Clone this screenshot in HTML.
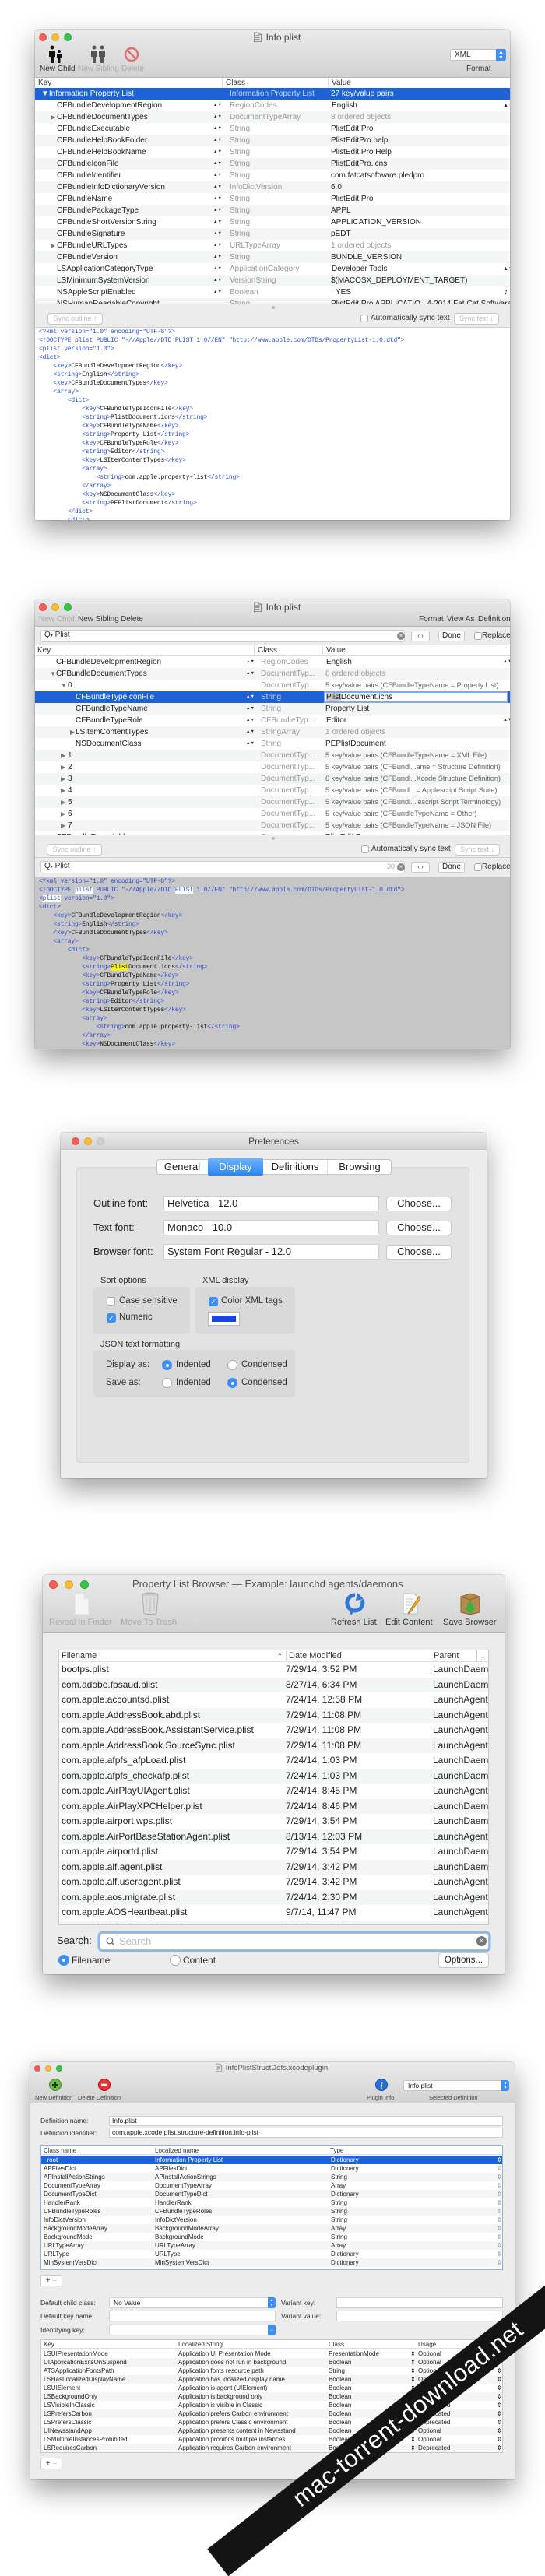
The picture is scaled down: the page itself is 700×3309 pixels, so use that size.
<!DOCTYPE html>
<html><head><meta charset="utf-8">
<style>
*{margin:0;padding:0;box-sizing:border-box}
body{width:700px;height:3241px;background:#fff;position:relative;overflow:hidden;font-family:"Liberation Sans",Arial,sans-serif;color:#222}
.win{position:absolute;background:#fff;box-shadow:0 14px 34px rgba(0,0,0,.38),0 0 0 1px rgba(0,0,0,.12);border-radius:5px 5px 2px 2px;overflow:hidden}
.a{position:absolute;white-space:nowrap}
.tb{position:absolute;left:0;right:0;top:0;background:linear-gradient(#ebebeb,#d2d2d2);border-bottom:1px solid #b5b5b5}
.tl{position:absolute;width:10px;height:10px;border-radius:50%}
.red{background:#fc5f57;border:1px solid #df4744}.yel{background:#fdbc2e;border:1px solid #dea236}.grn{background:#33c748;border:1px solid #27aa35}.gry{background:#d0d0d0;border:1px solid #bdbdbd}
.row{position:absolute;left:0;right:0;height:15px;font-size:10px;line-height:15px}
.alt{background:#f4f5f5}
.sel{background:#1f62d6;color:#fff}
.g{color:#9a9a9a}
.d{color:#666}
.v{font-size:9.3px;letter-spacing:-.1px}
.hdr{position:absolute;left:0;right:0;height:14px;font-size:10px;line-height:14px;background:#fff;border-bottom:1px solid #ddd;color:#333}
.btn{position:absolute;background:#fff;border:1px solid #c8c8c8;border-radius:4px;text-align:center}
.xml{position:absolute;font-family:"Liberation Mono",monospace;font-size:8px;line-height:11px;white-space:pre;color:#111;letter-spacing:-.2px}
.xml b{font-weight:normal;color:#2f4fd0}
.cb{position:absolute;width:11px;height:11px;border:1px solid #aaa;border-radius:3px;background:#fff}
.cbo{position:absolute;width:12px;height:12px;border-radius:3px;background:#3d8ff5;color:#fff;font-size:9px;line-height:12px;text-align:center}
.rd{position:absolute;width:13px;height:13px;border-radius:50%;border:1px solid #aaa;background:#fff}
.rdo{position:absolute;width:13px;height:13px;border-radius:50%;background:#3d8ff5}
.rdo:after{content:"";position:absolute;left:4.5px;top:4.5px;width:4px;height:4px;border-radius:50%;background:#fff}
.br{position:absolute;left:0;right:0;height:19.5px;font-size:12px;line-height:19.5px}
.fr{position:absolute;left:0;right:0;height:11px;font-size:8px;line-height:11px}
.fld{position:absolute;background:#fff;border:1px solid #cfcfcf}
</style></head><body>

<!-- ============ WINDOW 1 ============ -->
<div class="win" style="left:45px;top:38px;width:610px;height:630px;">
 <div class="tb" style="height:62px"></div>
 <div class="tl red" style="left:5px;top:5px"></div><div class="tl yel" style="left:21px;top:5px"></div><div class="tl grn" style="left:37px;top:5px"></div>
 <div class="a" style="left:278px;top:3px;font-size:12px;color:#444">&#128196;&#xFE0E; Info.plist</div>
 <svg class="a" style="left:16px;top:20px" width="22" height="24" viewBox="0 0 22 24"><circle cx="6" cy="3" r="2.5" fill="#111"/><path d="M2 7h8v8H8v8H4v-8H2z" fill="#111"/><circle cx="15" cy="8" r="2" fill="#111"/><path d="M12 11h6v6h-1.5v6h-3v-6H12z" fill="#111"/></svg>
 <svg class="a" style="left:70px;top:20px" width="22" height="24" viewBox="0 0 22 24"><circle cx="6" cy="3" r="2.5" fill="#555"/><path d="M2 7h8v8H8v8H4v-8H2z" fill="#555"/><circle cx="16" cy="3" r="2.5" fill="#555"/><path d="M12 7h8v8h-2v8h-4v-8h-2z" fill="#555"/></svg>
 <svg class="a" style="left:114px;top:22px" width="20" height="20" viewBox="0 0 20 20"><circle cx="10" cy="10" r="8" fill="none" stroke="#e46f6f" stroke-width="2.5"/><path d="M4.5 4.5l11 11" stroke="#e46f6f" stroke-width="2.5"/></svg>
 <div class="a" style="left:6px;top:45px;font-size:10px;color:#333">New Child</div>
 <div class="a" style="left:55px;top:45px;font-size:10px;color:#aaa">New Sibling</div>
 <div class="a" style="left:111px;top:45px;font-size:10px;color:#aaa">Delete</div>
 <div class="a" style="left:533px;top:25px;width:72px;height:15px;background:#fff;border:1px solid #c4c4c4;border-radius:3px;font-size:10px;line-height:13px;padding-left:5px;color:#333">XML</div>
 <div class="a" style="left:592px;top:25px;width:13px;height:15px;background:#3b8ff6;border-radius:0 3px 3px 0;color:#fff;font-size:7px;line-height:7px;text-align:center;padding-top:1px">&#9650;<br>&#9660;</div>
 <div class="a" style="left:554px;top:45px;font-size:10px;color:#333">Format</div>
 <div class="hdr" style="top:62px"><span class="a" style="left:4px">Key</span><span class="a" style="left:240px;border-left:1px solid #ddd;padding-left:4px">Class</span><span class="a" style="left:376px;border-left:1px solid #ddd;padding-left:4px">Value</span></div>
 <div class="a" style="left:0;right:0;top:75px;height:277px;overflow:hidden">
  <div class="row sel" style="top:0"><span class="a" style="left:8px">&#9660;Information Property List</span><span class="a" style="left:250px;color:#c6d6f5">Information Property List</span><span class="a" style="left:380px">27 key/value pairs</span></div>
  <div class="row" style="top:15px"><span class="a" style="left:28px">CFBundleDevelopmentRegion</span><span class="a g" style="left:250px">RegionCodes</span><span class="a" style="left:381px">English</span><span class="a" style="left:601px;font-size:7px">&#9650;&#9660;</span></div>
  <div class="row alt" style="top:30px"><span class="a" style="left:20px;font-size:8px;color:#777">&#9654;</span><span class="a" style="left:28px">CFBundleDocumentTypes</span><span class="a g" style="left:250px">DocumentTypeArray</span><span class="a g" style="left:380px">8 ordered objects</span></div>
  <div class="row" style="top:45px"><span class="a" style="left:28px">CFBundleExecutable</span><span class="a g" style="left:250px">String</span><span class="a" style="left:380px">PlistEdit Pro</span></div>
  <div class="row alt" style="top:60px"><span class="a" style="left:28px">CFBundleHelpBookFolder</span><span class="a g" style="left:250px">String</span><span class="a" style="left:380px">PlistEditPro.help</span></div>
  <div class="row" style="top:75px"><span class="a" style="left:28px">CFBundleHelpBookName</span><span class="a g" style="left:250px">String</span><span class="a" style="left:380px">PlistEdit Pro Help</span></div>
  <div class="row alt" style="top:90px"><span class="a" style="left:28px">CFBundleIconFile</span><span class="a g" style="left:250px">String</span><span class="a" style="left:380px">PlistEditPro.icns</span></div>
  <div class="row" style="top:105px"><span class="a" style="left:28px">CFBundleIdentifier</span><span class="a g" style="left:250px">String</span><span class="a" style="left:380px">com.fatcatsoftware.pledpro</span></div>
  <div class="row alt" style="top:120px"><span class="a" style="left:28px">CFBundleInfoDictionaryVersion</span><span class="a g" style="left:250px">InfoDictVersion</span><span class="a" style="left:380px">6.0</span></div>
  <div class="row" style="top:135px"><span class="a" style="left:28px">CFBundleName</span><span class="a g" style="left:250px">String</span><span class="a" style="left:380px">PlistEdit Pro</span></div>
  <div class="row alt" style="top:150px"><span class="a" style="left:28px">CFBundlePackageType</span><span class="a g" style="left:250px">String</span><span class="a" style="left:380px">APPL</span></div>
  <div class="row" style="top:165px"><span class="a" style="left:28px">CFBundleShortVersionString</span><span class="a g" style="left:250px">String</span><span class="a" style="left:380px">APPLICATION_VERSION</span></div>
  <div class="row alt" style="top:180px"><span class="a" style="left:28px">CFBundleSignature</span><span class="a g" style="left:250px">String</span><span class="a" style="left:380px">pEDT</span></div>
  <div class="row" style="top:195px"><span class="a" style="left:20px;font-size:8px;color:#777">&#9654;</span><span class="a" style="left:28px">CFBundleURLTypes</span><span class="a g" style="left:250px">URLTypeArray</span><span class="a g" style="left:380px">1 ordered objects</span></div>
  <div class="row alt" style="top:210px"><span class="a" style="left:28px">CFBundleVersion</span><span class="a g" style="left:250px">String</span><span class="a" style="left:380px">BUNDLE_VERSION</span></div>
  <div class="row" style="top:225px"><span class="a" style="left:28px">LSApplicationCategoryType</span><span class="a g" style="left:250px">ApplicationCategory</span><span class="a" style="left:381px">Developer Tools</span><span class="a" style="left:601px;font-size:7px">&#9650;&#9660;</span></div>
  <div class="row alt" style="top:240px"><span class="a" style="left:28px">LSMinimumSystemVersion</span><span class="a g" style="left:250px">VersionString</span><span class="a" style="left:380px">$(MACOSX_DEPLOYMENT_TARGET)</span></div>
  <div class="row" style="top:255px"><span class="a" style="left:28px">NSAppleScriptEnabled</span><span class="a g" style="left:250px">Boolean</span><span class="a" style="left:386px">YES</span><span class="a" style="left:601px;font-size:8px">&#8661;</span></div>
  <div class="row alt" style="top:270px"><span class="a" style="left:28px">NSHumanReadableCopyright</span><span class="a g" style="left:250px">String</span><span class="a" style="left:380px">PlistEdit Pro APPLICATIO...4-2014 Fat Cat Software</span></div>
 </div>
 <div class="a" style="left:229px;top:90px;font-size:5.5px;line-height:15px;color:#333;white-space:pre">▲▼
▲▼
▲▼
▲▼
▲▼
▲▼
▲▼
▲▼
▲▼
▲▼
▲▼
▲▼
▲▼
▲▼
▲▼
▲▼
▲▼</div>
 <div class="a" style="left:0;right:0;top:352px;height:31px;background:#ececec;border-top:1px solid #c9c9c9;border-bottom:1px solid #cfcfcf"></div>
 <div class="a" style="left:304px;top:355px;width:4px;height:4px;border-radius:50%;background:#bbb"></div>
 <div class="btn" style="left:16px;top:364px;width:71px;height:15px;font-size:9px;line-height:13px;color:#bbb">Sync outline &#8593;</div>
 <div class="cb" style="left:418px;top:366px;width:10px;height:10px"></div>
 <div class="a" style="left:431px;top:365px;font-size:10px;color:#333">Automatically sync text</div>
 <div class="btn" style="left:538px;top:364px;width:58px;height:15px;font-size:9px;line-height:13px;color:#bbb">Sync text &#8595;</div>
 <div class="xml" style="left:5px;top:383px"><b>&lt;?xml version="1.0" encoding="UTF-8"?&gt;</b>
<b>&lt;!DOCTYPE plist PUBLIC "-//Apple//DTD PLIST 1.0//EN" "http://www.apple.com/DTDs/PropertyList-1.0.dtd"&gt;</b>
<b>&lt;plist version="1.0"&gt;</b>
<b>&lt;dict&gt;</b>
    <b>&lt;key&gt;</b>CFBundleDevelopmentRegion<b>&lt;/key&gt;</b>
    <b>&lt;string&gt;</b>English<b>&lt;/string&gt;</b>
    <b>&lt;key&gt;</b>CFBundleDocumentTypes<b>&lt;/key&gt;</b>
    <b>&lt;array&gt;</b>
        <b>&lt;dict&gt;</b>
            <b>&lt;key&gt;</b>CFBundleTypeIconFile<b>&lt;/key&gt;</b>
            <b>&lt;string&gt;</b>PlistDocument.icns<b>&lt;/string&gt;</b>
            <b>&lt;key&gt;</b>CFBundleTypeName<b>&lt;/key&gt;</b>
            <b>&lt;string&gt;</b>Property List<b>&lt;/string&gt;</b>
            <b>&lt;key&gt;</b>CFBundleTypeRole<b>&lt;/key&gt;</b>
            <b>&lt;string&gt;</b>Editor<b>&lt;/string&gt;</b>
            <b>&lt;key&gt;</b>LSItemContentTypes<b>&lt;/key&gt;</b>
            <b>&lt;array&gt;</b>
                <b>&lt;string&gt;</b>com.apple.property-list<b>&lt;/string&gt;</b>
            <b>&lt;/array&gt;</b>
            <b>&lt;key&gt;</b>NSDocumentClass<b>&lt;/key&gt;</b>
            <b>&lt;string&gt;</b>PEPlistDocument<b>&lt;/string&gt;</b>
        <b>&lt;/dict&gt;</b>
        <b>&lt;dict&gt;</b></div>
</div>

<!-- ============ WINDOW 2 ============ -->
<div class="win" style="left:45px;top:770px;width:610px;height:577px;">
 <div class="tb" style="height:35px"></div>
 <div class="tl red" style="left:5px;top:5px"></div><div class="tl yel" style="left:21px;top:5px"></div><div class="tl grn" style="left:37px;top:5px"></div>
 <div class="a" style="left:278px;top:3px;font-size:12px;color:#444">&#128196;&#xFE0E; Info.plist</div>
 <div class="a" style="left:5px;top:20px;font-size:10px;color:#aaa">New Child</div>
 <div class="a" style="left:55px;top:20px;font-size:10px;color:#333">New Sibling</div>
 <div class="a" style="left:110px;top:20px;font-size:10px;color:#333">Delete</div>
 <div class="a" style="left:493px;top:20px;font-size:10px;color:#333">Format</div>
 <div class="a" style="left:529px;top:20px;font-size:10px;color:#333">View As</div>
 <div class="a" style="left:569px;top:20px;font-size:10px;color:#333">Definition</div>
 <div class="a" style="left:0;right:0;top:35px;height:24px;background:#ececec;border-bottom:1px solid #cfcfcf"></div>
 <div class="fld" style="left:7px;top:39px;width:468px;height:16px;border-radius:3px"></div>
 <div class="a" style="left:12px;top:40px;font-size:10px;color:#333">Q<span style="font-size:6px">&#9662;</span> Plist</div>
 <div class="a" style="left:465px;top:42px;width:10px;height:10px;border-radius:50%;background:#888;color:#fff;font-size:8px;line-height:10px;text-align:center">&#215;</div>
 <div class="btn" style="left:483px;top:40px;width:24px;height:14px;font-size:8px;line-height:12px;color:#444;border-radius:3px">&#8249; &#8250;</div>
 <div class="btn" style="left:518px;top:40px;width:34px;height:14px;font-size:10px;line-height:12px;border-radius:3px">Done</div>
 <div class="cb" style="left:564px;top:42px;width:10px;height:10px"></div>
 <div class="a" style="left:574px;top:41px;font-size:10px;color:#333">Replace</div>
 <div class="hdr" style="top:59px"><span class="a" style="left:3px">Key</span><span class="a" style="left:281px;border-left:1px solid #ddd;padding-left:4px">Class</span><span class="a" style="left:369px;border-left:1px solid #ddd;padding-left:4px">Value</span></div>
 <div class="a" style="left:0;right:0;top:73px;height:229px;overflow:hidden">
  <div class="row" style="top:0"><span class="a" style="left:27px">CFBundleDevelopmentRegion</span><span class="a g" style="left:290px">RegionCodes</span><span class="a" style="left:374px">English</span><span class="a" style="left:601px;font-size:6px">&#9650;&#9660;</span></div>
  <div class="row alt" style="top:15px"><span class="a" style="left:19px;font-size:8px;color:#777">&#9660;</span><span class="a" style="left:27px">CFBundleDocumentTypes</span><span class="a g" style="left:290px">DocumentTyp...</span><span class="a g" style="left:373px">8 ordered objects</span></div>
  <div class="row" style="top:30px"><span class="a" style="left:33px;font-size:8px;color:#777">&#9660;</span><span class="a" style="left:42px">0</span><span class="a g" style="left:290px">DocumentTyp...</span><span class="a d v" style="left:373px">5 key/value pairs (CFBundleTypeName = Property List)</span></div>
  <div class="row sel" style="top:45px"><span class="a" style="left:52px">CFBundleTypeIconFile</span><span class="a" style="left:290px;color:#c6d6f5">String</span><span class="a" style="left:371px;width:237px;height:15px;background:#fff;color:#111;border:2px solid #7eaaf0;line-height:11px;padding-left:1px"><span style="background:#ccc">Plist</span>Document.icns</span></div>
  <div class="row alt" style="top:60px"><span class="a" style="left:52px">CFBundleTypeName</span><span class="a g" style="left:290px">String</span><span class="a" style="left:373px">Property List</span></div>
  <div class="row" style="top:75px"><span class="a" style="left:52px">CFBundleTypeRole</span><span class="a g" style="left:290px">CFBundleTyp...</span><span class="a" style="left:374px">Editor</span><span class="a" style="left:601px;font-size:6px">&#9650;&#9660;</span></div>
  <div class="row alt" style="top:90px"><span class="a" style="left:45px;font-size:8px;color:#777">&#9654;</span><span class="a" style="left:52px">LSItemContentTypes</span><span class="a g" style="left:290px">StringArray</span><span class="a g" style="left:373px">1 ordered objects</span></div>
  <div class="row" style="top:105px"><span class="a" style="left:52px">NSDocumentClass</span><span class="a g" style="left:290px">String</span><span class="a" style="left:373px">PEPlistDocument</span></div>
  <div class="row alt" style="top:120px"><span class="a" style="left:33px;font-size:8px;color:#777">&#9654;</span><span class="a" style="left:42px">1</span><span class="a g" style="left:290px">DocumentTyp...</span><span class="a d v" style="left:373px">5 key/value pairs (CFBundleTypeName = XML File)</span></div>
  <div class="row" style="top:135px"><span class="a" style="left:33px;font-size:8px;color:#777">&#9654;</span><span class="a" style="left:42px">2</span><span class="a g" style="left:290px">DocumentTyp...</span><span class="a d v" style="left:373px">5 key/value pairs (CFBundl...ame = Structure Definition)</span></div>
  <div class="row alt" style="top:150px"><span class="a" style="left:33px;font-size:8px;color:#777">&#9654;</span><span class="a" style="left:42px">3</span><span class="a g" style="left:290px">DocumentTyp...</span><span class="a d v" style="left:373px">6 key/value pairs (CFBundl...Xcode Structure Definition)</span></div>
  <div class="row" style="top:165px"><span class="a" style="left:33px;font-size:8px;color:#777">&#9654;</span><span class="a" style="left:42px">4</span><span class="a g" style="left:290px">DocumentTyp...</span><span class="a d v" style="left:373px">5 key/value pairs (CFBundl...= Applescript Script Suite)</span></div>
  <div class="row alt" style="top:180px"><span class="a" style="left:33px;font-size:8px;color:#777">&#9654;</span><span class="a" style="left:42px">5</span><span class="a g" style="left:290px">DocumentTyp...</span><span class="a d v" style="left:373px">5 key/value pairs (CFBundl...lescript Script Terminology)</span></div>
  <div class="row" style="top:195px"><span class="a" style="left:33px;font-size:8px;color:#777">&#9654;</span><span class="a" style="left:42px">6</span><span class="a g" style="left:290px">DocumentTyp...</span><span class="a d v" style="left:373px">5 key/value pairs (CFBundleTypeName = Other)</span></div>
  <div class="row alt" style="top:210px"><span class="a" style="left:33px;font-size:8px;color:#777">&#9654;</span><span class="a" style="left:42px">7</span><span class="a g" style="left:290px">DocumentTyp...</span><span class="a d v" style="left:373px">5 key/value pairs (CFBundleTypeName = JSON File)</span></div>
  <div class="row" style="top:225px"><span class="a" style="left:27px">CFBundleExecutable</span><span class="a g" style="left:290px">String</span><span class="a" style="left:373px">PlistEdit Pro</span></div>
  <div class="a" style="left:271px;top:0;font-size:5.5px;line-height:15px;color:#333;white-space:pre">▲▼
▲▼
 
<span style="color:#fff">▲▼</span>
▲▼
▲▼
▲▼
▲▼</div>
 </div>
 <div class="a" style="left:0;right:0;top:302px;height:30px;background:#ececec;border-top:1px solid #c9c9c9;border-bottom:1px solid #cfcfcf"></div>
 <div class="a" style="left:304px;top:305px;width:4px;height:4px;border-radius:50%;background:#bbb"></div>
 <div class="btn" style="left:15px;top:314px;width:71px;height:15px;font-size:9px;line-height:13px;color:#bbb">Sync outline &#8593;</div>
 <div class="cb" style="left:419px;top:316px;width:10px;height:10px"></div>
 <div class="a" style="left:432px;top:315px;font-size:10px;color:#333">Automatically sync text</div>
 <div class="btn" style="left:539px;top:314px;width:58px;height:15px;font-size:9px;line-height:13px;color:#bbb">Sync text &#8595;</div>
 <div class="a" style="left:0;right:0;top:332px;height:25px;background:#ececec;border-bottom:1px solid #cfcfcf"></div>
 <div class="fld" style="left:7px;top:336px;width:468px;height:16px;border-radius:3px"></div>
 <div class="a" style="left:12px;top:337px;font-size:10px;color:#333">Q<span style="font-size:6px">&#9662;</span> Plist</div>
 <div class="a" style="left:452px;top:338px;font-size:9px;color:#aaa">30</div>
 <div class="a" style="left:465px;top:339px;width:10px;height:10px;border-radius:50%;background:#888;color:#fff;font-size:8px;line-height:10px;text-align:center">&#215;</div>
 <div class="btn" style="left:483px;top:337px;width:24px;height:14px;font-size:8px;line-height:12px;color:#444;border-radius:3px">&#8249; &#8250;</div>
 <div class="btn" style="left:518px;top:337px;width:34px;height:14px;font-size:10px;line-height:12px;border-radius:3px">Done</div>
 <div class="cb" style="left:564px;top:339px;width:10px;height:10px"></div>
 <div class="a" style="left:574px;top:338px;font-size:10px;color:#333">Replace</div>
 <div class="a" style="left:0;right:0;top:357px;bottom:0;background:#c6c6c6"></div>
 <div class="xml" style="left:5px;top:357px"><b>&lt;?xml version="1.0" encoding="UTF-8"?&gt;</b>
<b>&lt;!DOCTYPE <span style="background:#fff">plist</span> PUBLIC "-//Apple//DTD <span style="background:#fff">PLIST</span> 1.0//EN" "http://www.apple.com/DTDs/PropertyList-1.0.dtd"&gt;</b>
<b>&lt;<span style="background:#fff">plist</span> version="1.0"&gt;</b>
<b>&lt;dict&gt;</b>
    <b>&lt;key&gt;</b>CFBundleDevelopmentRegion<b>&lt;/key&gt;</b>
    <b>&lt;string&gt;</b>English<b>&lt;/string&gt;</b>
    <b>&lt;key&gt;</b>CFBundleDocumentTypes<b>&lt;/key&gt;</b>
    <b>&lt;array&gt;</b>
        <b>&lt;dict&gt;</b>
            <b>&lt;key&gt;</b>CFBundleTypeIconFile<b>&lt;/key&gt;</b>
            <b>&lt;string&gt;</b><span style="background:#f7f01a">Plist</span>Document.icns<b>&lt;/string&gt;</b>
            <b>&lt;key&gt;</b>CFBundleTypeName<b>&lt;/key&gt;</b>
            <b>&lt;string&gt;</b>Property List<b>&lt;/string&gt;</b>
            <b>&lt;key&gt;</b>CFBundleTypeRole<b>&lt;/key&gt;</b>
            <b>&lt;string&gt;</b>Editor<b>&lt;/string&gt;</b>
            <b>&lt;key&gt;</b>LSItemContentTypes<b>&lt;/key&gt;</b>
            <b>&lt;array&gt;</b>
                <b>&lt;string&gt;</b>com.apple.property-list<b>&lt;/string&gt;</b>
            <b>&lt;/array&gt;</b>
            <b>&lt;key&gt;</b>NSDocumentClass<b>&lt;/key&gt;</b></div>
</div>

<!-- ============ PREFERENCES ============ -->
<div class="win" style="left:78px;top:1455px;width:547px;height:444px;background:#ececec">
 <div class="tb" style="height:22px;border-bottom:1px solid #c8c8c8"></div>
 <div class="tl red" style="left:14px;top:6px"></div><div class="tl yel" style="left:30px;top:6px"></div><div class="tl gry" style="left:46px;top:6px"></div>
 <div class="a" style="left:0;width:547px;top:4px;text-align:center;font-size:12px;color:#444">Preferences</div>
 <div class="a" style="left:20px;top:44px;width:505px;height:380px;background:#e3e3e3;border:1px solid #d8d8d8;border-radius:4px"></div>
 <div class="a" style="left:123px;top:34px;width:302px;height:20px;background:#fff;border:1px solid #c5c5c5;border-radius:4px"></div>
 <div class="a" style="left:123px;top:35px;width:66px;text-align:center;font-size:13px;line-height:18px">General</div>
 <div class="a" style="left:189px;top:33px;width:71px;height:22px;background:linear-gradient(#6cb3fa,#2b84f0);color:#fff;text-align:center;font-size:13px;line-height:21px;border-radius:2px">Display</div>
 <div class="a" style="left:260px;top:35px;width:83px;text-align:center;font-size:13px;line-height:18px;border-right:1px solid #ddd">Definitions</div>
 <div class="a" style="left:343px;top:35px;width:82px;text-align:center;font-size:13px;line-height:18px">Browsing</div>

 <div class="a" style="left:42px;top:83px;font-size:13px">Outline font:</div>
 <div class="fld" style="left:132px;top:81px;width:277px;height:20px;font-size:13px;line-height:18px;padding-left:4px">Helvetica - 12.0</div>
 <div class="btn" style="left:418px;top:82px;width:84px;height:19px;font-size:13px;line-height:16px">Choose...</div>
 <div class="a" style="left:42px;top:114px;font-size:13px">Text font:</div>
 <div class="fld" style="left:132px;top:112px;width:277px;height:20px;font-size:13px;line-height:18px;padding-left:4px">Monaco - 10.0</div>
 <div class="btn" style="left:418px;top:113px;width:84px;height:19px;font-size:13px;line-height:16px">Choose...</div>
 <div class="a" style="left:42px;top:145px;font-size:13px">Browser font:</div>
 <div class="fld" style="left:132px;top:143px;width:277px;height:20px;font-size:13px;line-height:18px;padding-left:4px">System Font Regular - 12.0</div>
 <div class="btn" style="left:418px;top:144px;width:84px;height:19px;font-size:13px;line-height:16px">Choose...</div>

 <div class="a" style="left:51px;top:184px;font-size:11px;color:#333">Sort options</div>
 <div class="a" style="left:42px;top:198px;width:124px;height:60px;background:#d9d9d9;border-radius:4px"></div>
 <div class="cb" style="left:59px;top:211px"></div>
 <div class="a" style="left:75px;top:210px;font-size:11.5px;color:#333">Case sensitive</div>
 <div class="cbo" style="left:59px;top:232px">&#10003;</div>
 <div class="a" style="left:75px;top:231px;font-size:11.5px;color:#333">Numeric</div>
 <div class="a" style="left:182px;top:184px;font-size:11px;color:#333">XML display</div>
 <div class="a" style="left:173px;top:198px;width:128px;height:60px;background:#d9d9d9;border-radius:4px"></div>
 <div class="cbo" style="left:190px;top:211px">&#10003;</div>
 <div class="a" style="left:206px;top:210px;font-size:11.5px;color:#333">Color XML tags</div>
 <div class="a" style="left:189px;top:230px;width:41px;height:18px;background:#fff;border:1px solid #bbb"></div>
 <div class="a" style="left:194px;top:235px;width:31px;height:8px;background:#1846e6"></div>
 <div class="a" style="left:51px;top:266px;font-size:11px;color:#333">JSON text formatting</div>
 <div class="a" style="left:42px;top:279px;width:259px;height:61px;background:#d9d9d9;border-radius:4px"></div>
 <div class="a" style="left:58px;top:292px;font-size:11.5px;color:#333">Display as:</div>
 <div class="rdo" style="left:130px;top:292px"></div>
 <div class="a" style="left:148px;top:292px;font-size:11.5px;color:#333">Indented</div>
 <div class="rd" style="left:214px;top:292px"></div>
 <div class="a" style="left:232px;top:292px;font-size:11.5px;color:#333">Condensed</div>
 <div class="a" style="left:58px;top:315px;font-size:11.5px;color:#333">Save as:</div>
 <div class="rd" style="left:130px;top:315px"></div>
 <div class="a" style="left:148px;top:315px;font-size:11.5px;color:#333">Indented</div>
 <div class="rdo" style="left:214px;top:315px"></div>
 <div class="a" style="left:232px;top:315px;font-size:11.5px;color:#333">Condensed</div>
</div>

<!-- ============ BROWSER ============ -->
<div class="win" style="left:55px;top:2023px;width:593px;height:513px;background:#ececec">
 <div class="tb" style="height:75px"></div>
 <div class="tl red" style="left:8px;top:7px;width:11px;height:11px"></div><div class="tl yel" style="left:28px;top:7px;width:11px;height:11px"></div><div class="tl grn" style="left:48px;top:7px;width:11px;height:11px"></div>
 <div class="a" style="left:115px;top:4px;font-size:13px;color:#555">Property List Browser — Example: launchd agents/daemons</div>
 <svg class="a" style="left:39px;top:23px" width="22" height="29" viewBox="0 0 22 29"><path d="M2 1h12l6 6v21H2z" fill="#f5f5f5" stroke="#ddd"/><path d="M14 1v6h6" fill="#e6e6e6" stroke="#ddd"/></svg>
 <svg class="a" style="left:126px;top:22px" width="24" height="30" viewBox="0 0 24 30"><ellipse cx="12" cy="4" rx="10" ry="3" fill="#ccc" stroke="#aaa"/><path d="M2 5l2 22c0 2 16 2 16 0l2-22" fill="#ddd" stroke="#aaa"/><path d="M7 8v17M12 8v18M17 8v17" stroke="#bbb"/></svg>
 <svg class="a" style="left:388px;top:23px" width="26" height="30" viewBox="0 0 26 30"><path d="M13 3a10 10 0 1 0 9 6" fill="none" stroke="#2e79d8" stroke-width="5"/><path d="M16 0l8 8-10 2z" fill="#2e79d8"/><path d="M5 22l3 7 4-6z" fill="#2e79d8"/></svg>
 <svg class="a" style="left:461px;top:22px" width="26" height="30" viewBox="0 0 26 30"><path d="M2 2h14l4 4v22H2z" fill="#fafafa" stroke="#bbb"/><path d="M5 9h10M5 13h10M5 17h8M5 21h6" stroke="#ccc"/><path d="M22 6L10 24l-2 4 4-3L24 8z" fill="#f0b233" stroke="#b07a10"/></svg>
 <svg class="a" style="left:534px;top:22px" width="30" height="30" viewBox="0 0 30 30"><path d="M3 6l12-4 12 4v20l-12 3-12-3z" fill="#b58a4a" stroke="#8a6230"/><path d="M3 6l12 4 12-4M15 10v19" stroke="#8a6230" fill="none"/><path d="M11 14h8v6h4l-8 8-8-8h4z" fill="#3cb043"/></svg>
 <div class="a" style="left:8px;top:55px;font-size:11px;color:#aaa">Reveal In Finder</div>
 <div class="a" style="left:100px;top:55px;font-size:11px;color:#aaa">Move To Trash</div>
 <div class="a" style="left:370px;top:55px;font-size:11px;color:#333">Refresh List</div>
 <div class="a" style="left:440px;top:55px;font-size:11px;color:#333">Edit Content</div>
 <div class="a" style="left:514px;top:55px;font-size:11px;color:#333">Save Browser</div>
 <div class="a" style="left:20px;top:96px;width:553px;height:354px;background:#fff;border:1px solid #c9c9c9;overflow:hidden">
  <div class="a" style="left:0;right:0;top:0;height:15px;border-bottom:1px solid #ddd;font-size:11px;line-height:15px;color:#333">
   <span class="a" style="left:3px">Filename</span><span class="a" style="left:280px;font-size:8px">&#8963;</span>
   <span class="a" style="left:291px;border-left:1px solid #ddd;padding-left:3px">Date Modified</span>
   <span class="a" style="left:477px;border-left:1px solid #ddd;padding-left:3px">Parent</span>
   <span class="a" style="left:536px;width:16px;height:15px;border-left:1px solid #ccc;text-align:center;font-size:9px">&#8964;</span>
  </div>
  <div class="a" style="left:0;right:0;top:15px">
   <div class="br" style="top:0"><span class="a" style="left:3px">bootps.plist</span><span class="a" style="left:291px">7/29/14, 3:52 PM</span><span class="a" style="left:480px">LaunchDaem</span></div>
   <div class="br alt" style="top:19.5px"><span class="a" style="left:3px">com.adobe.fpsaud.plist</span><span class="a" style="left:291px">8/27/14, 6:34 PM</span><span class="a" style="left:480px">LaunchDaem</span></div>
   <div class="br" style="top:39px"><span class="a" style="left:3px">com.apple.accountsd.plist</span><span class="a" style="left:291px">7/24/14, 12:58 PM</span><span class="a" style="left:480px">LaunchAgent</span></div>
   <div class="br alt" style="top:58.5px"><span class="a" style="left:3px">com.apple.AddressBook.abd.plist</span><span class="a" style="left:291px">7/29/14, 11:08 PM</span><span class="a" style="left:480px">LaunchAgent</span></div>
   <div class="br" style="top:78px"><span class="a" style="left:3px">com.apple.AddressBook.AssistantService.plist</span><span class="a" style="left:291px">7/29/14, 11:08 PM</span><span class="a" style="left:480px">LaunchAgent</span></div>
   <div class="br alt" style="top:97.5px"><span class="a" style="left:3px">com.apple.AddressBook.SourceSync.plist</span><span class="a" style="left:291px">7/29/14, 11:08 PM</span><span class="a" style="left:480px">LaunchAgent</span></div>
   <div class="br" style="top:117px"><span class="a" style="left:3px">com.apple.afpfs_afpLoad.plist</span><span class="a" style="left:291px">7/24/14, 1:03 PM</span><span class="a" style="left:480px">LaunchDaem</span></div>
   <div class="br alt" style="top:136.5px"><span class="a" style="left:3px">com.apple.afpfs_checkafp.plist</span><span class="a" style="left:291px">7/24/14, 1:03 PM</span><span class="a" style="left:480px">LaunchDaem</span></div>
   <div class="br" style="top:156px"><span class="a" style="left:3px">com.apple.AirPlayUIAgent.plist</span><span class="a" style="left:291px">7/24/14, 8:45 PM</span><span class="a" style="left:480px">LaunchAgent</span></div>
   <div class="br alt" style="top:175.5px"><span class="a" style="left:3px">com.apple.AirPlayXPCHelper.plist</span><span class="a" style="left:291px">7/24/14, 8:46 PM</span><span class="a" style="left:480px">LaunchDaem</span></div>
   <div class="br" style="top:195px"><span class="a" style="left:3px">com.apple.airport.wps.plist</span><span class="a" style="left:291px">7/29/14, 3:54 PM</span><span class="a" style="left:480px">LaunchDaem</span></div>
   <div class="br alt" style="top:214.5px"><span class="a" style="left:3px">com.apple.AirPortBaseStationAgent.plist</span><span class="a" style="left:291px">8/13/14, 12:03 PM</span><span class="a" style="left:480px">LaunchAgent</span></div>
   <div class="br" style="top:234px"><span class="a" style="left:3px">com.apple.airportd.plist</span><span class="a" style="left:291px">7/29/14, 3:54 PM</span><span class="a" style="left:480px">LaunchDaem</span></div>
   <div class="br alt" style="top:253.5px"><span class="a" style="left:3px">com.apple.alf.agent.plist</span><span class="a" style="left:291px">7/29/14, 3:42 PM</span><span class="a" style="left:480px">LaunchDaem</span></div>
   <div class="br" style="top:273px"><span class="a" style="left:3px">com.apple.alf.useragent.plist</span><span class="a" style="left:291px">7/29/14, 3:42 PM</span><span class="a" style="left:480px">LaunchAgent</span></div>
   <div class="br alt" style="top:292.5px"><span class="a" style="left:3px">com.apple.aos.migrate.plist</span><span class="a" style="left:291px">7/24/14, 2:30 PM</span><span class="a" style="left:480px">LaunchAgent</span></div>
   <div class="br" style="top:312px"><span class="a" style="left:3px">com.apple.AOSHeartbeat.plist</span><span class="a" style="left:291px">9/7/14, 11:47 PM</span><span class="a" style="left:480px">LaunchAgent</span></div>
   <div class="br alt" style="top:331.5px"><span class="a" style="left:3px">com.apple.AOSPushRelay.plist</span><span class="a" style="left:291px">7/24/14, 1:04 PM</span><span class="a" style="left:480px">LaunchAgent</span></div>
  </div>
 </div>
 <div class="a" style="left:18px;top:462px;font-size:13px;color:#222">Search:</div>
 <div class="a" style="left:73px;top:460px;width:500px;height:22px;background:#fff;border:1px solid #bbb;border-radius:4px;box-shadow:0 0 0 2.5px #8ab7ee"></div>
 <svg class="a" style="left:81px;top:465px" width="12" height="12" viewBox="0 0 12 12"><circle cx="5" cy="5" r="3.8" fill="none" stroke="#666" stroke-width="1.2"/><path d="M8 8l3 3" stroke="#666" stroke-width="1.3"/></svg>
 <div class="a" style="left:96px;top:463px;font-size:13px;color:#bbb;border-left:1px solid #333;padding-left:1px;line-height:15px">Search</div>
 <div class="a" style="left:557px;top:464px;width:13px;height:13px;border-radius:50%;background:#777;color:#fff;font-size:10px;line-height:13px;text-align:center">&#215;</div>
 <div class="rdo" style="left:20px;top:488px;width:14px;height:14px"></div>
 <div class="a" style="left:37px;top:488px;font-size:12px;color:#333">Filename</div>
 <div class="rd" style="left:163px;top:488px;width:14px;height:14px"></div>
 <div class="a" style="left:180px;top:488px;font-size:12px;color:#333">Content</div>
 <div class="btn" style="left:508px;top:485px;width:65px;height:20px;font-size:11.5px;line-height:18px">Options...</div>
</div>

<!-- ============ WINDOW 5 ============ -->
<div class="win" style="left:39px;top:2649px;width:622px;height:536px;background:#ececec">
 <div class="tb" style="height:53px"></div>
 <div class="tl red" style="left:5px;top:4px;width:8px;height:8px"></div><div class="tl yel" style="left:19px;top:4px;width:8px;height:8px"></div><div class="tl grn" style="left:33px;top:4px;width:8px;height:8px"></div>
 <div class="a" style="left:236px;top:2px;font-size:9.5px;color:#555">&#128196;&#xFE0E; InfoPlistStructDefs.xcodeplugin</div>
 <svg class="a" style="left:24px;top:21px" width="16" height="16" viewBox="0 0 16 16"><circle cx="8" cy="8" r="7.5" fill="#6cb84a" stroke="#4a8a30"/><path d="M8 4v8M4 8h8" stroke="#1a3a10" stroke-width="2"/></svg>
 <svg class="a" style="left:87px;top:21px" width="16" height="16" viewBox="0 0 16 16"><circle cx="8" cy="8" r="7.5" fill="#e33" stroke="#a11"/><path d="M4 8h8" stroke="#fff" stroke-width="2.5"/></svg>
 <svg class="a" style="left:443px;top:21px" width="16" height="16" viewBox="0 0 16 16"><circle cx="8" cy="8" r="7.5" fill="#2a6fd8" stroke="#1b4fa0"/><text x="8" y="12.5" font-size="11" font-style="italic" font-weight="bold" text-anchor="middle" fill="#fff" font-family="Liberation Serif">i</text></svg>
 <div class="a" style="left:479px;top:23px;width:136px;height:14px;background:#fff;border:1px solid #c4c4c4;border-radius:3px;font-size:8.5px;line-height:12px;padding-left:5px">Info.plist</div>
 <div class="a" style="left:605px;top:23px;width:10px;height:14px;background:#3b8ff6;border-radius:0 3px 3px 0;color:#fff;font-size:5px;line-height:6px;text-align:center;padding-top:1px">&#9650;<br>&#9660;</div>
 <div class="a" style="left:6px;top:41px;font-size:7.5px;color:#444">New Definition</div>
 <div class="a" style="left:61px;top:41px;font-size:7.5px;color:#444">Delete Definition</div>
 <div class="a" style="left:432px;top:41px;font-size:7.5px;color:#444">Plugin Info</div>
 <div class="a" style="left:512px;top:41px;font-size:7.5px;color:#444">Selected Definition</div>

 <div class="a" style="left:13px;top:70px;font-size:8.5px;color:#333">Definition name:</div>
 <div class="fld" style="left:101px;top:69px;width:506px;height:13px;font-size:8.5px;line-height:11px;padding-left:3px">Info.plist</div>
 <div class="a" style="left:13px;top:86px;font-size:8.5px;color:#333">Definition identifier:</div>
 <div class="fld" style="left:101px;top:84px;width:506px;height:13px;font-size:8.5px;line-height:11px;padding-left:3px">com.apple.xcode.plist.structure-definition.info-plist</div>

 <div class="a" style="left:13px;top:107px;width:594px;height:160px;background:#fff;border:1px solid #8db4e8;overflow:hidden">
  <div class="fr" style="top:0;border-bottom:1px solid #ddd;color:#333"><span class="a" style="left:3px">Class name</span><span class="a" style="left:146px">Localized name</span><span class="a" style="left:371px">Type</span></div>
  <div class="fr sel" style="top:12px"><span class="a" style="left:3px">_root_</span><span class="a" style="left:146px">Information Property List</span><span class="a" style="left:372px">Dictionary</span><span class="a" style="left:585px">&#8661;</span></div>
  <div class="fr" style="top:23px"><span class="a" style="left:3px">APFilesDict</span><span class="a" style="left:146px">APFilesDict</span><span class="a" style="left:372px">Dictionary</span><span class="a g" style="left:585px">&#8661;</span></div>
  <div class="fr alt" style="top:34px"><span class="a" style="left:3px">APInstallActionStrings</span><span class="a" style="left:146px">APInstallActionStrings</span><span class="a" style="left:372px">String</span><span class="a g" style="left:585px">&#8661;</span></div>
  <div class="fr" style="top:45px"><span class="a" style="left:3px">DocumentTypeArray</span><span class="a" style="left:146px">DocumentTypeArray</span><span class="a" style="left:372px">Array</span><span class="a g" style="left:585px">&#8661;</span></div>
  <div class="fr alt" style="top:56px"><span class="a" style="left:3px">DocumentTypeDict</span><span class="a" style="left:146px">DocumentTypeDict</span><span class="a" style="left:372px">Dictionary</span><span class="a g" style="left:585px">&#8661;</span></div>
  <div class="fr" style="top:67px"><span class="a" style="left:3px">HandlerRank</span><span class="a" style="left:146px">HandlerRank</span><span class="a" style="left:372px">String</span><span class="a g" style="left:585px">&#8661;</span></div>
  <div class="fr alt" style="top:78px"><span class="a" style="left:3px">CFBundleTypeRoles</span><span class="a" style="left:146px">CFBundleTypeRoles</span><span class="a" style="left:372px">String</span><span class="a g" style="left:585px">&#8661;</span></div>
  <div class="fr" style="top:89px"><span class="a" style="left:3px">InfoDictVersion</span><span class="a" style="left:146px">InfoDictVersion</span><span class="a" style="left:372px">String</span><span class="a g" style="left:585px">&#8661;</span></div>
  <div class="fr alt" style="top:100px"><span class="a" style="left:3px">BackgroundModeArray</span><span class="a" style="left:146px">BackgroundModeArray</span><span class="a" style="left:372px">Array</span><span class="a g" style="left:585px">&#8661;</span></div>
  <div class="fr" style="top:111px"><span class="a" style="left:3px">BackgroundMode</span><span class="a" style="left:146px">BackgroundMode</span><span class="a" style="left:372px">String</span><span class="a g" style="left:585px">&#8661;</span></div>
  <div class="fr alt" style="top:122px"><span class="a" style="left:3px">URLTypeArray</span><span class="a" style="left:146px">URLTypeArray</span><span class="a" style="left:372px">Array</span><span class="a g" style="left:585px">&#8661;</span></div>
  <div class="fr" style="top:133px"><span class="a" style="left:3px">URLType</span><span class="a" style="left:146px">URLType</span><span class="a" style="left:372px">Dictionary</span><span class="a g" style="left:585px">&#8661;</span></div>
  <div class="fr alt" style="top:144px"><span class="a" style="left:3px">MinSystemVersDict</span><span class="a" style="left:146px">MinSystemVersDict</span><span class="a" style="left:372px">Dictionary</span><span class="a g" style="left:585px">&#8661;</span></div>
 </div>
 <div class="btn" style="left:13px;top:273px;width:28px;height:15px;border-radius:2px;font-size:10px;line-height:13px;color:#333">+ <span style="color:#bbb">&#8211;</span></div>

 <div class="a" style="left:13px;top:304px;font-size:8.5px;color:#333">Default child class:</div>
 <div class="fld" style="left:101px;top:302px;width:214px;height:14px;font-size:8.5px;line-height:12px;padding-left:5px;border-radius:3px">No Value</div>
 <div class="a" style="left:305px;top:302px;width:10px;height:14px;background:#3b8ff6;border-radius:0 3px 3px 0;color:#fff;font-size:5px;line-height:6px;text-align:center;padding-top:1px">&#9650;<br>&#9660;</div>
 <div class="a" style="left:322px;top:304px;font-size:8.5px;color:#333">Variant key:</div>
 <div class="fld" style="left:393px;top:302px;width:214px;height:14px"></div>
 <div class="a" style="left:13px;top:321px;font-size:8.5px;color:#333">Default key name:</div>
 <div class="fld" style="left:101px;top:319px;width:214px;height:14px"></div>
 <div class="a" style="left:322px;top:321px;font-size:8.5px;color:#333">Variant value:</div>
 <div class="fld" style="left:393px;top:319px;width:214px;height:14px"></div>
 <div class="a" style="left:13px;top:339px;font-size:8.5px;color:#333">Identifying key:</div>
 <div class="fld" style="left:101px;top:337px;width:214px;height:14px;border-radius:3px"></div>
 <div class="a" style="left:305px;top:337px;width:10px;height:14px;background:#3b8ff6;border-radius:0 3px 3px 0;color:#fff;font-size:6px;line-height:14px;text-align:center">&#8964;</div>

 <div class="a" style="left:13px;top:356px;width:594px;height:146px;background:#fff;border:1px solid #c9c9c9;overflow:hidden">
  <div class="fr" style="top:0;border-bottom:1px solid #ddd;color:#333"><span class="a" style="left:3px">Key</span><span class="a" style="left:176px">Localized String</span><span class="a" style="left:369px">Class</span><span class="a" style="left:484px">Usage</span></div>
  <div class="fr" style="top:12px"><span class="a" style="left:3px">LSUIPresentationMode</span><span class="a" style="left:176px">Application UI Presentation Mode</span><span class="a" style="left:369px">PresentationMode</span><span class="a" style="left:474px">&#8661;</span><span class="a" style="left:484px">Optional</span><span class="a" style="left:585px">&#8661;</span></div>
  <div class="fr alt" style="top:23px"><span class="a" style="left:3px">UIApplicationExitsOnSuspend</span><span class="a" style="left:176px">Application does not run in background</span><span class="a" style="left:369px">Boolean</span><span class="a" style="left:474px">&#8661;</span><span class="a" style="left:484px">Optional</span><span class="a" style="left:585px">&#8661;</span></div>
  <div class="fr" style="top:34px"><span class="a" style="left:3px">ATSApplicationFontsPath</span><span class="a" style="left:176px">Application fonts resource path</span><span class="a" style="left:369px">String</span><span class="a" style="left:474px">&#8661;</span><span class="a" style="left:484px">Optional</span><span class="a" style="left:585px">&#8661;</span></div>
  <div class="fr alt" style="top:45px"><span class="a" style="left:3px">LSHasLocalizedDisplayName</span><span class="a" style="left:176px">Application has localized display name</span><span class="a" style="left:369px">Boolean</span><span class="a" style="left:474px">&#8661;</span><span class="a" style="left:484px">Optional</span><span class="a" style="left:585px">&#8661;</span></div>
  <div class="fr" style="top:56px"><span class="a" style="left:3px">LSUIElement</span><span class="a" style="left:176px">Application is agent (UIElement)</span><span class="a" style="left:369px">Boolean</span><span class="a" style="left:474px">&#8661;</span><span class="a" style="left:484px">Optional</span><span class="a" style="left:585px">&#8661;</span></div>
  <div class="fr alt" style="top:67px"><span class="a" style="left:3px">LSBackgroundOnly</span><span class="a" style="left:176px">Application is background only</span><span class="a" style="left:369px">Boolean</span><span class="a" style="left:474px">&#8661;</span><span class="a" style="left:484px">Optional</span><span class="a" style="left:585px">&#8661;</span></div>
  <div class="fr" style="top:78px"><span class="a" style="left:3px">LSVisibleInClassic</span><span class="a" style="left:176px">Application is visible in Classic</span><span class="a" style="left:369px">Boolean</span><span class="a" style="left:474px">&#8661;</span><span class="a" style="left:484px">Deprecated</span><span class="a" style="left:585px">&#8661;</span></div>
  <div class="fr alt" style="top:89px"><span class="a" style="left:3px">LSPrefersCarbon</span><span class="a" style="left:176px">Application prefers Carbon environment</span><span class="a" style="left:369px">Boolean</span><span class="a" style="left:474px">&#8661;</span><span class="a" style="left:484px">Deprecated</span><span class="a" style="left:585px">&#8661;</span></div>
  <div class="fr" style="top:100px"><span class="a" style="left:3px">LSPrefersClassic</span><span class="a" style="left:176px">Application prefers Classic environment</span><span class="a" style="left:369px">Boolean</span><span class="a" style="left:474px">&#8661;</span><span class="a" style="left:484px">Deprecated</span><span class="a" style="left:585px">&#8661;</span></div>
  <div class="fr alt" style="top:111px"><span class="a" style="left:3px">UINewsstandApp</span><span class="a" style="left:176px">Application presents content in Newsstand</span><span class="a" style="left:369px">Boolean</span><span class="a" style="left:474px">&#8661;</span><span class="a" style="left:484px">Optional</span><span class="a" style="left:585px">&#8661;</span></div>
  <div class="fr" style="top:122px"><span class="a" style="left:3px">LSMultipleInstancesProhibited</span><span class="a" style="left:176px">Application prohibits multiple instances</span><span class="a" style="left:369px">Boolean</span><span class="a" style="left:474px">&#8661;</span><span class="a" style="left:484px">Optional</span><span class="a" style="left:585px">&#8661;</span></div>
  <div class="fr alt" style="top:133px"><span class="a" style="left:3px">LSRequiresCarbon</span><span class="a" style="left:176px">Application requires Carbon environment</span><span class="a" style="left:369px">Boolean</span><span class="a" style="left:474px">&#8661;</span><span class="a" style="left:484px">Deprecated</span><span class="a" style="left:585px">&#8661;</span></div>
 </div>
 <div class="btn" style="left:13px;top:508px;width:28px;height:15px;border-radius:2px;font-size:10px;line-height:13px;color:#333">+ <span style="color:#bbb">&#8211;</span></div>
</div>

<div class="a" style="left:214px;top:3079px;width:620px;height:44px;background:#141414;transform:rotate(-38deg);transform-origin:50% 50%;color:#fff;font-size:31px;line-height:44px;text-align:center;letter-spacing:0.5px">mac-torrent-download.net</div>
</body></html>
